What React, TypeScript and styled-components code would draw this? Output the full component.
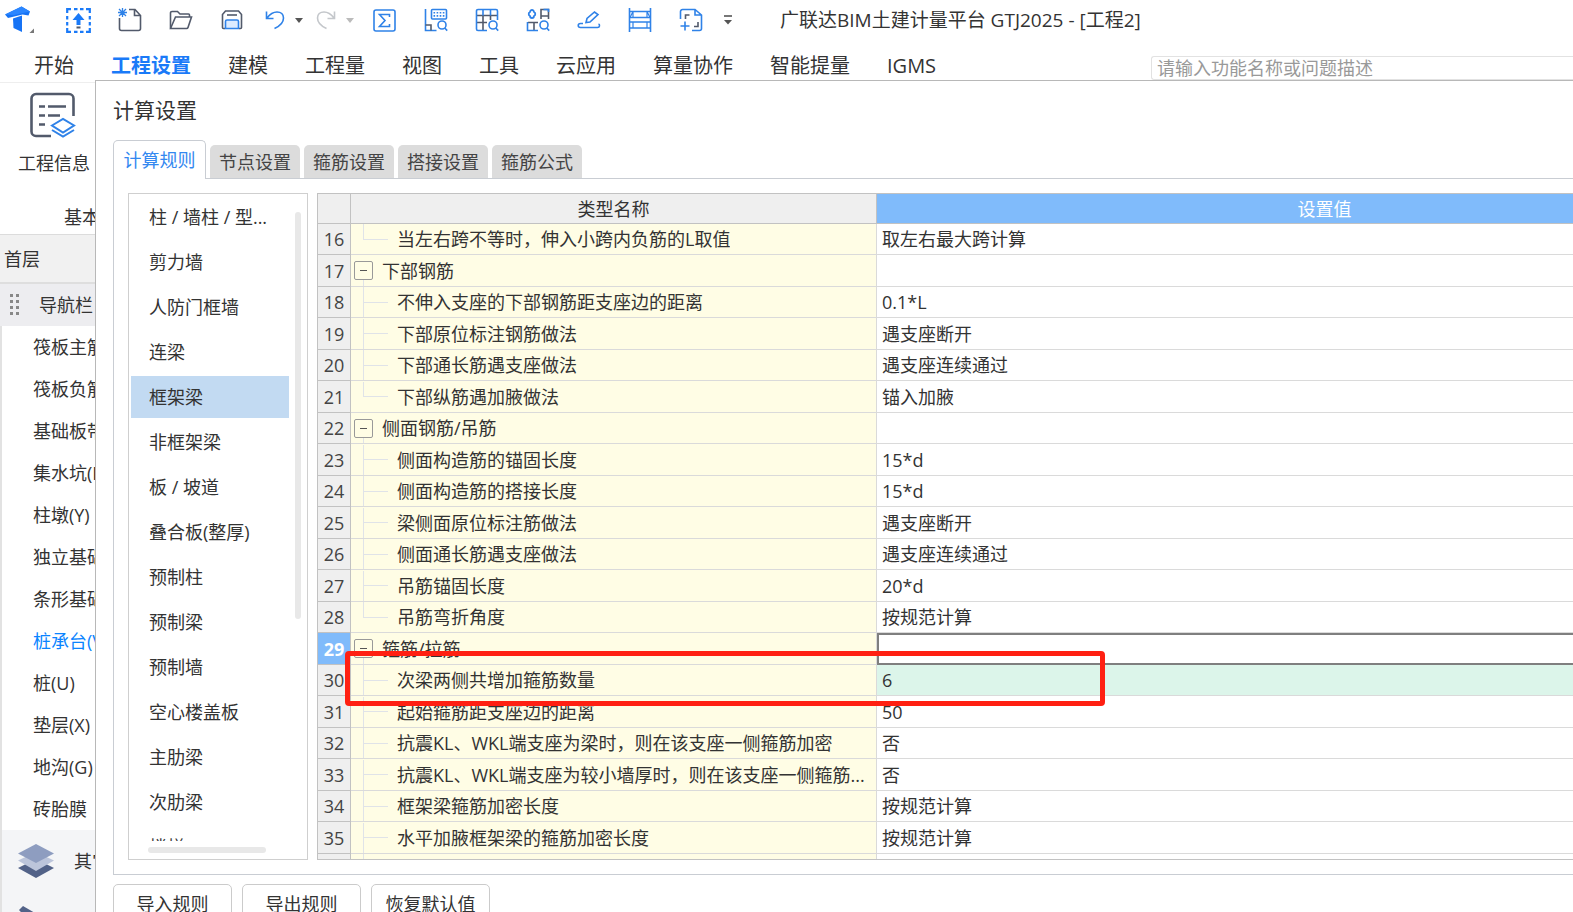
import React from "react";
import styled, { createGlobalStyle, css } from "styled-components";

const C = {
  text: "#333",
  soft: "#444",
  blue: "#1a7af8",
  icon: "#2f82e8",
  slate: "#525a6b",
  line: "#dadada",
  headLine: "#c2c2c2",
  accent: "#80bbfb",
  twig: "#e0e3e8",
};

const Global = createGlobalStyle`
  *, *::before, *::after { box-sizing: border-box; }
  html, body { margin: 0; height: 100%; overflow: hidden; }
  #root { height: 100%; }
  body, button, input, table {
    font-family: "Open Sans", "Noto Sans CJK SC", sans-serif;
    font-size: 18px;
    line-height: 26px;
    color: ${C.text};
  }
  button { background: none; border: 0; padding: 0; margin: 0; white-space: nowrap; cursor: pointer; }
  ul { list-style: none; margin: 0; padding: 0; }
`;

const Page = styled.div`
  height: 100vh;
  overflow: hidden;
  display: flex;
  flex-direction: column;
  background: #fff;
`;

const TitleBar = styled.header`
  height: 40px;
  flex: none;
  display: flex;
  align-items: center;
  padding-left: 4px;
`;

const Tools = styled.div`
  display: flex;
  align-items: center;
  width: 776px;
  flex: none;
`;

const Tool = styled.button<{ $size?: "menu" | "split" | "caret" | "more" }>`
  width: ${(p) => ({ menu: 49, split: 36, caret: 12, more: 24, normal: 51 })[p.$size ?? "normal"]}px;
  height: 40px;
  display: flex;
  align-items: center;
  justify-content: ${(p) => (p.$size === "menu" ? "flex-start" : "center")};
  flex: none;
  svg { display: block; overflow: visible; }
`;

const SplitTool = styled.div`
  width: 51px;
  display: flex;
  flex: none;
`;

const AppTitle = styled.h1`
  margin: 0;
  font-size: 19px;
  font-weight: 400;
  white-space: nowrap;
`;

const MenuBar = styled.nav`
  height: 40px;
  flex: none;
  display: flex;
  align-items: center;
  padding-left: 34px;
`;

const MenuItems = styled.div`
  display: flex;
  gap: 37px;
  padding-top: 12px;
  width: 1117px;
  flex: none;
`;

const MenuItem = styled.button<{ $active?: boolean }>`
  font-size: 20px;
  line-height: 28px;
  color: ${(p) => (p.$active ? C.blue : C.text)};
  font-weight: ${(p) => (p.$active ? 700 : 400)};
`;

const SearchBox = styled.input`
  align-self: flex-end;
  flex: 1;
  min-width: 0;
  height: 24px;
  border: 1px solid #e2e2e2;
  border-right: 0;
  border-radius: 3px 0 0 3px;
  padding: 0 5px;
  outline: 0;
  background: #fff;
  &::placeholder { color: #999; opacity: 1; }
`;

const Body = styled.div`
  flex: 1;
  min-height: 0;
  display: flex;
  overflow: hidden;
`;

const Sidebar = styled.aside`
  width: 95px;
  flex: none;
  overflow: hidden;
  white-space: nowrap;
  display: flex;
  flex-direction: column;
`;

const Ribbon = styled.div`
  height: 152px;
  flex: none;
  margin-top: 2px;
  border-top: 1px solid #eee;
  display: flex;
  flex-direction: column;
  justify-content: space-between;
`;

const RibbonButton = styled.button`
  display: flex;
  flex-direction: column;
  align-items: flex-start;
  gap: 12px;
  padding: 9px 0 0 18px;
  svg { margin-left: 12px; display: block; }
`;

const RibbonGroup = styled.div`
  padding: 0 0 4px 64px;
`;

const FloorBar = styled.div`
  height: 48px;
  flex: none;
  background: #f1f1f1;
  border-top: 1px solid #dcdcdc;
  padding: 11px 0 0 4px;
`;

const NavHeader = styled.div`
  height: 44px;
  flex: none;
  background: #ededf0;
  border-top: 2px solid #dedede;
  display: flex;
  align-items: center;
  gap: 19px;
  padding-left: 10px;
`;

const NavList = styled.ul`
  border-left: 2px solid #e2e2e2;
  flex: none;
`;

const NavItem = styled.li<{ $active?: boolean }>`
  button {
    display: block;
    width: 100%;
    height: 42px;
    text-align: left;
    padding-left: 31px;
    color: ${(p) => (p.$active ? "#0a84ff" : C.text)};
  }
`;

const NavSections = styled.div`
  flex: 1;
  background: #f4f5f7;
  border-left: 2px solid #e2e2e2;
  overflow: hidden;
`;

const NavSection = styled.button`
  display: flex;
  align-items: center;
  height: 62px;
  gap: 20px;
  padding-left: 16px;
  svg { flex: none; }
`;

const Dialog = styled.section`
  flex: 1;
  min-width: 0;
  margin-right: -232px;
  border-top: 1px solid #b8b8b8;
  border-left: 1px solid #b8b8b8;
  background: #fff;
  padding: 14px 16px 0 17px;
  display: flex;
  flex-direction: column;
`;

const DialogTitle = styled.h2`
  margin: 0;
  font-size: 21px;
  line-height: 30px;
  font-weight: 400;
`;

const Tabs = styled.div`
  display: flex;
  align-items: flex-end;
  gap: 4px;
  height: 39px;
  margin-top: 15px;
`;

const Tab = styled.button<{ $active?: boolean }>`
  width: 90px;
  height: 33px;
  border-radius: 5px 5px 0 0;
  background: #dcdcdc;
  color: ${C.soft};
  ${(p) =>
    p.$active &&
    css`
      width: 93px;
      height: 39px;
      background: #fff;
      color: #3388f0;
      border: 1px solid #c9cdd3;
      border-bottom: 0;
      margin-bottom: -1px;
      z-index: 1;
    `}
`;

const Panel = styled.div`
  border: 1px solid #c9cdd3;
  height: 697px;
  flex: none;
  padding: 14px;
  display: flex;
  gap: 9px;
`;

const Types = styled.div`
  position: relative;
  width: 180px;
  height: 667px;
  flex: none;
  border: 1px solid #cfcfcf;
  overflow: hidden;
  padding: 2px;
`;

const TypeItem = styled.li<{ $active?: boolean }>`
  height: 42px;
  width: 158px;
  margin-bottom: 3px;
  background: ${(p) => (p.$active ? "#c2daf2" : "transparent")};
  button { width: 100%; height: 42px; text-align: left; padding-left: 18px; }
`;

const ScrollY = styled.span`
  position: absolute;
  right: 6px;
  top: 18px;
  width: 6px;
  height: 407px;
  border-radius: 3px;
  background: #e8e8e8;
`;

const ScrollX = styled.div`
  position: absolute;
  inset: auto 0 0 0;
  height: 18px;
  background: #fff;
  &::after {
    content: "";
    display: block;
    width: 118px;
    height: 6px;
    margin: 6px 0 0 19px;
    border-radius: 3px;
    background: #e8e8e8;
  }
`;

const GridWrap = styled.div`
  position: relative;
  flex: 1;
  min-width: 0;
  height: 667px;
  overflow: hidden;
  border: 1px solid ${C.headLine};
`;

const Grid = styled.table`
  width: 100%;
  table-layout: fixed;
  border-collapse: separate;
  border-spacing: 0;
  th, td { padding: 0; font-weight: 400; white-space: nowrap; }
`;

const NumCol = styled.col`
  width: 33px;
`;

const NameCol = styled.col`
  width: 526px;
`;

const HeadCell = styled.th<{ $active?: boolean }>`
  height: 30px;
  background: ${(p) => (p.$active ? C.accent : "#efefef")};
  color: ${(p) => (p.$active ? "#fff" : C.text)};
  border-right: 1px solid ${C.headLine};
  border-bottom: 1px solid ${C.headLine};
`;

const Row = styled.tr`
  height: 31px;
  &:nth-child(even) { height: 32px; }
`;

const NumCell = styled.th<{ $active?: boolean }>`
  background: ${(p) => (p.$active ? C.accent : "#efefef")};
  border-right: 1px solid ${C.headLine};
  border-bottom: 1px solid ${C.headLine};
  && {
    color: ${(p) => (p.$active ? "#fff" : C.soft)};
    font-weight: ${(p) => (p.$active ? 700 : 400)};
  }
`;

type Kind = "group" | "child" | "last";

const NameCell = styled.td`
  background: #fffde5;
  border-right: 1px solid ${C.line};
  border-bottom: 1px solid ${C.line};
`;

const stem = {
  group: "12px 24px / 1px 8px",
  child: "12px 0 / 1px 100%",
  last: "12px 0 / 1px 15px",
};

const NameInner = styled.div<{ $kind: Kind }>`
  display: flex;
  align-items: center;
  height: 30px;
  padding-right: 6px;
  gap: 9px;
  padding-left: ${(p) => (p.$kind === "group" ? 3 : 12)}px;
  background: linear-gradient(${C.twig}, ${C.twig}) ${(p) => stem[p.$kind]} no-repeat;
  > span { overflow: hidden; text-overflow: ellipsis; }
`;

const Twig = styled.i`
  width: 25px;
  height: 1px;
  flex: none;
  background: ${C.twig};
`;

const Toggle = styled.button`
  width: 19px;
  height: 19px;
  flex: none;
  border: 1px solid #999;
  border-radius: 2px;
  display: flex;
  align-items: center;
  justify-content: center;
  &::after { content: ""; width: 7px; height: 1px; background: #555; }
`;

const ValueCell = styled.td<{ $tone?: "edit" | "changed" }>`
  && { padding-left: 5px; }
  border-right: 1px solid ${C.line};
  border-bottom: 1px solid ${C.line};
  background: ${(p) => (p.$tone === "changed" ? "#dcf5ea" : "#fff")};
  ${(p) => p.$tone === "edit" && css`border: 2px solid #7f7f7f;`}
`;

const Highlight = styled.div`
  position: absolute;
  left: 27px;
  top: 457px;
  width: 760px;
  height: 55px;
  border: 5px solid #ff2012;
  border-radius: 4px;
  pointer-events: none;
`;

const Actions = styled.div`
  display: flex;
  gap: 10px;
  margin-top: 9px;
`;

const ActionButton = styled.button`
  width: 119px;
  height: 40px;
  border: 1px solid #cbcbcb;
  border-radius: 5px;
  background: #fff;
`;

const svg = (w: number, h: number, children: React.ReactNode, color = C.icon) => (
  <svg width={w} height={h} viewBox={`0 0 ${w} ${h}`} fill="none" stroke={color} strokeWidth="1.6" aria-hidden="true">
    {children}
  </svg>
);

const Caret = ({ color = "#555" }: { color?: string }) => (
  <svg width="8" height="5" viewBox="0 0 8 5" aria-hidden="true">
    <path d="M0 0h8L4 5z" fill={color} />
  </svg>
);

const Lens = () => (
  <>
    <circle cx="18" cy="17" r="4" />
    <path d="M20.800 20l2.400 2.600" />
  </>
);

const icons = {
  logo: svg(30, 28, (
    <g stroke="none">
      <path d="M1 8.500L17.500 .500L26 5.500L24.500 9.500L18.500 8.500L4 12z" fill="#1673f5" />
      <path d="M1 8.500L17.500 .500L26 5.500L10 9z" fill="#2b86ff" />
      <path d="M9 12.500L18 9.500V26L9.500 22z" fill="#1673f5" />
      <path d="M30 22.500v4.500h-4.500z" fill="#777" />
    </g>
  )),
  upload: svg(25, 25, (
    <>
      <path d="M1.200 5V1.200H5M20 1.200h3.800V5M23.800 20v3.800H20M5 23.800H1.200V20" stroke="#1a7af8" strokeWidth="2.200" />
      <path d="M8 1.200h3.500M14 1.200h3.500M8 23.800h3.500M14 23.800h3.500M1.200 8v3.500M1.200 14v3.500M23.800 8v3.500M23.800 14v3.500" stroke="#1a7af8" strokeWidth="2.200" />
      <path d="M12.500 5L18.500 12h-4v5h-4v-5h-4z" fill="#1a7af8" stroke="none" />
      <path d="M10.500 19.500h4" stroke={C.slate} strokeWidth="2" />
    </>
  )),
  create: svg(24, 24, (
    <>
      <path d="M1.500 10v10.500a2 2 0 0 0 2 2h17a2 2 0 0 0 2-2V7.500L17 1.500h-6M16.500 1.500v6h6" />
      <path d="M1 1l7 7M8 1L1 8M4.500 0v9M0 4.500h9" stroke={C.icon} strokeWidth="1.300" />
    </>
  ), C.slate),
  open: svg(24, 20, (
    <>
      <path d="M1.500 18V3a1.500 1.500 0 0 1 1.500-1.500h5.500l2.500 2.500h8.500a1 1 0 0 1 1 1v2" />
      <path d="M1.500 18.500L6.500 7h16l-3.500 10.500a1.500 1.500 0 0 1-1.500 1z" />
    </>
  ), C.slate),
  save: svg(22, 20, (
    <>
      <path d="M4 18.500H2.500a1 1 0 0 1-1-1V4.500l3-3.500h13l3 3.500v13a1 1 0 0 1-1 1H18" />
      <path d="M6 5h10" />
      <path d="M4.500 18.500v-7a1.500 1.500 0 0 1 1.500-1.500h10a1.500 1.500 0 0 1 1.500 1.500v7z" stroke={C.icon} fill="#dcebff" />
    </>
  ), C.slate),
  undo: svg(20, 20, <path d="M1.500 1.500v7h7M2 8C5 4 8.500 2 12 2c4 0 6.500 2.500 6.500 6 0 4.500-3.500 8-9 10.500" />),
  redo: svg(20, 20, <path d="M18.500 1.500v7h-7M18 8C15 4 11.500 2 8 2 4 2 1.500 4.500 1.500 8c0 4.500 3.500 8 9 10.500" />, "#c4c7cb"),
  sum: svg(23, 23, (
    <>
      <rect x="1" y="1" width="21" height="21" rx="2" />
      <path d="M16.500 8V5.500H6.500l5.500 6-5.500 6h10V15" />
    </>
  )),
  plan: svg(24, 24, (
    <>
      <path d="M1.500 1v21.500h11" />
      <path d="M1.500 17h5.500v5.500" stroke={C.slate} />
      <rect x="7.500" y="1.500" width="15" height="9.500" rx="1" />
      <path d="M9.500 4.700h11M9.500 7.900h11" strokeDasharray="1.600 1.500" />
      <Lens />
    </>
  )),
  table: svg(24, 24, (
    <>
      <path d="M8 7.500v15M15.500 7.500V12M2 14.500h10M2 7.500h20" stroke={C.slate} />
      <path d="M12 22.500H3a1.500 1.500 0 0 1-1.500-1.500V3A1.500 1.500 0 0 1 3 1.500h18A1.500 1.500 0 0 1 22.500 3v9M8 1.500v6M15.500 1.500v6" />
      <Lens />
    </>
  )),
  parts: svg(24, 24, (
    <>
      <path d="M6 2a2 2 0 0 0-2 2 2.200 2.200 0 0 0 0 4 2 2 0 0 0 4 0 2.200 2.200 0 0 0 0-4 2 2 0 0 0-2-2z" strokeWidth="1.800" />
      <path d="M15 11V1.500h7.500V11M15 8h7.500M2 14.500h10M8 14.500v8" stroke={C.slate} />
      <path d="M22.500 4V1.500h-5M1.500 14v8.500H12" />
      <Lens />
    </>
  )),
  edit: svg(24, 18, (
    <>
      <path d="M9 11.500l1-4L17.500 1 21 3.500 13 11z" />
      <path d="M6 12.500H3.500c-3 0-3 4 0 4h17c2.500 0 2.500-3 1-3.500" />
    </>
  )),
  beam: svg(24, 24, (
    <>
      <path d="M1.500 0v24M22.500 0v24" />
      <path d="M1.500 3.500h21M1.500 9.500h21M1.500 14h21M1.500 20h21" />
      <path d="M5 3.500L2 9.500M5 14v6M19 3.500l3 6M19 14v6M5 3.500v6M19 3.500v6" strokeWidth="1.200" />
    </>
  )),
  addPage: svg(24, 24, (
    <>
      <path d="M1.500 11V3.500a2 2 0 0 1 2-2H16l6.500 5.500v13.500a2 2 0 0 1-2 2H13M16 1.500V7h6.500" />
      <path d="M6.500 11V7h4M19 14v4.500h-4" stroke={C.slate} />
      <path d="M6 13.500v9M1.500 18h9" />
    </>
  )),
  more: svg(8, 10, (
    <>
      <path d="M0 1h8" stroke="#555" />
      <path d="M0 5h8L4 9.500z" fill="#555" stroke="none" />
    </>
  )),
};

const quickTools: [keyof typeof icons, string][] = [
  ["sum", "汇总计算"],
  ["plan", "查看工程量"],
  ["table", "查看报表"],
  ["parts", "查看构件量"],
  ["edit", "编辑钢筋"],
  ["beam", "梁平齐板"],
  ["addPage", "新建图元"],
];

const menu = ["开始", "工程设置", "建模", "工程量", "视图", "工具", "云应用", "算量协作", "智能提量", "IGMS"];
const navItems = ["筏板主筋(R)", "筏板负筋(X)", "基础板带(W)", "集水坑(K)", "柱墩(Y)", "独立基础(D)", "条形基础(T)", "桩承台(V)", "桩(U)", "垫层(X)", "地沟(G)", "砖胎膜"];
const tabs = ["计算规则", "节点设置", "箍筋设置", "搭接设置", "箍筋公式"];
const types = ["柱 / 墙柱 / 型...", "剪力墙", "人防门框墙", "连梁", "框架梁", "非框架梁", "板 / 坡道", "叠合板(整厚)", "预制柱", "预制梁", "预制墙", "空心楼盖板", "主肋梁", "次肋梁", "楼梯"];
const rows: [number, Kind, string, string][] = [
  [16, "last", "当左右跨不等时，伸入小跨内负筋的L取值", "取左右最大跨计算"],
  [17, "group", "下部钢筋", ""],
  [18, "child", "不伸入支座的下部钢筋距支座边的距离", "0.1*L"],
  [19, "child", "下部原位标注钢筋做法", "遇支座断开"],
  [20, "child", "下部通长筋遇支座做法", "遇支座连续通过"],
  [21, "last", "下部纵筋遇加腋做法", "锚入加腋"],
  [22, "group", "侧面钢筋/吊筋", ""],
  [23, "child", "侧面构造筋的锚固长度", "15*d"],
  [24, "child", "侧面构造筋的搭接长度", "15*d"],
  [25, "child", "梁侧面原位标注筋做法", "遇支座断开"],
  [26, "child", "侧面通长筋遇支座做法", "遇支座连续通过"],
  [27, "child", "吊筋锚固长度", "20*d"],
  [28, "last", "吊筋弯折角度", "按规范计算"],
  [29, "group", "箍筋/拉筋", ""],
  [30, "child", "次梁两侧共增加箍筋数量", "6"],
  [31, "child", "起始箍筋距支座边的距离", "50"],
  [32, "child", "抗震KL、WKL端支座为梁时，则在该支座一侧箍筋加密", "否"],
  [33, "child", "抗震KL、WKL端支座为较小墙厚时，则在该支座一侧箍筋...", "否"],
  [34, "child", "框架梁箍筋加密长度", "按规范计算"],
  [35, "child", "水平加腋框架梁的箍筋加密长度", "按规范计算"],
];

const QuickBar = () => (
  <Tools role="toolbar" aria-label="快速访问">
    <Tool $size="menu" aria-label="应用菜单">{icons.logo}</Tool>
    <Tool aria-label="上传">{icons.upload}</Tool>
    <Tool aria-label="新建">{icons.create}</Tool>
    <Tool aria-label="打开">{icons.open}</Tool>
    <Tool aria-label="保存">{icons.save}</Tool>
    <SplitTool>
      <Tool $size="split" aria-label="撤销">{icons.undo}</Tool>
      <Tool $size="caret" aria-label="撤销列表"><Caret /></Tool>
    </SplitTool>
    <SplitTool>
      <Tool $size="split" aria-label="恢复">{icons.redo}</Tool>
      <Tool $size="caret" aria-label="恢复列表"><Caret color="#bbb" /></Tool>
    </SplitTool>
    {quickTools.map(([icon, label]) => (
      <Tool key={icon} aria-label={label}>{icons[icon]}</Tool>
    ))}
    <Tool $size="more" aria-label="更多">{icons.more}</Tool>
  </Tools>
);

const InfoIcon = () => (
  <svg width="46" height="46" viewBox="0 0 46 46" fill="none" aria-hidden="true">
    <path d="M21 44H6a4.500 4.500 0 0 1-4.500-4.500v-33A4.500 4.500 0 0 1 6 2h33a4.500 4.500 0 0 1 4.500 4.500V24" stroke={C.slate} strokeWidth="2.600" />
    <path d="M9 14.500h6M18 14.500h18M9 23.500h6M18 23.500h12M9 32.500h6" stroke={C.slate} strokeWidth="2.600" />
    <path d="M22 33.500L33 27l11 6.500L33 40.500z" stroke={C.icon} strokeWidth="2" fill="#fff" />
    <path d="M22 38l11 6.500L44 38" stroke={C.icon} strokeWidth="2" />
  </svg>
);

const DotsIcon = () => (
  <svg width="10" height="22" viewBox="0 0 10 22" fill="#888" aria-hidden="true">
    {[0, 6, 12, 18].map((y) => (
      <g key={y}>
        <rect x="0" y={y} width="3" height="3" />
        <rect x="6" y={y} width="3" height="3" />
      </g>
    ))}
  </svg>
);

const LayersIcon = () => (
  <svg width="36" height="34" viewBox="0 0 36 34" aria-hidden="true">
    <path d="M0 24L18 15l18 9-18 10z" fill="#526288" />
    <path d="M0 16.500L18 8l18 8.500L18 27z" fill="#bcc5db" />
    <path d="M0 9.500L18 0l18 9.500L18 19z" fill="#8e9dc0" />
  </svg>
);

const PencilIcon = () => (
  <svg width="36" height="34" viewBox="0 0 36 34" aria-hidden="true">
    <path d="M1 4L5 0l24 14 3 12-12-2z" fill="#526288" />
  </svg>
);

export default function App() {
  return (
    <Page>
      <Global />
      <TitleBar>
        <QuickBar />
        <AppTitle>广联达BIM土建计量平台 GTJ2025 - [工程2]</AppTitle>
      </TitleBar>
      <MenuBar>
        <MenuItems>
          {menu.map((m, i) => (
            <MenuItem key={m} $active={i === 1}>{m}</MenuItem>
          ))}
        </MenuItems>
        <SearchBox aria-label="搜索功能" placeholder="请输入功能名称或问题描述" />
      </MenuBar>
      <Body>
        <Sidebar>
          <Ribbon>
            <RibbonButton><InfoIcon />工程信息</RibbonButton>
            <RibbonGroup>基本设置</RibbonGroup>
          </Ribbon>
          <FloorBar>首层</FloorBar>
          <NavHeader><DotsIcon />导航栏</NavHeader>
          <NavList>
            {navItems.map((n, i) => (
              <NavItem key={n} $active={i === 7}><button>{n}</button></NavItem>
            ))}
          </NavList>
          <NavSections>
            <NavSection><LayersIcon />其它</NavSection>
            <NavSection aria-label="自定义"><PencilIcon /></NavSection>
          </NavSections>
        </Sidebar>
        <Dialog role="dialog" aria-labelledby="dialog-title">
          <DialogTitle id="dialog-title">计算设置</DialogTitle>
          <Tabs role="tablist">
            {tabs.map((t, i) => (
              <Tab key={t} role="tab" aria-selected={i === 0} $active={i === 0}>{t}</Tab>
            ))}
          </Tabs>
          <Panel>
            <Types>
              <ul>
                {types.map((t, i) => (
                  <TypeItem key={t} $active={i === 4}><button>{t}</button></TypeItem>
                ))}
              </ul>
              <ScrollY />
              <ScrollX />
            </Types>
            <GridWrap>
              <Grid>
                <colgroup>
                  <NumCol />
                  <NameCol />
                  <col />
                </colgroup>
                <thead>
                  <tr>
                    <HeadCell aria-label="序号" />
                    <HeadCell>类型名称</HeadCell>
                    <HeadCell $active>设置值</HeadCell>
                  </tr>
                </thead>
                <tbody>
                  {rows.map(([n, kind, name, value]) => (
                    <Row key={n}>
                      <NumCell scope="row" $active={n === 29}>{n}</NumCell>
                      <NameCell>
                        <NameInner $kind={kind}>
                          {kind === "group" ? <Toggle aria-label="折叠" /> : <Twig />}
                          <span>{name}</span>
                        </NameInner>
                      </NameCell>
                      <ValueCell $tone={n === 29 ? "edit" : n === 30 ? "changed" : undefined}>{value}</ValueCell>
                    </Row>
                  ))}
                  <Row>
                    <NumCell />
                    <NameCell><NameInner $kind="child" /></NameCell>
                    <ValueCell />
                  </Row>
                </tbody>
              </Grid>
              <Highlight />
            </GridWrap>
          </Panel>
          <Actions>
            <ActionButton>导入规则</ActionButton>
            <ActionButton>导出规则</ActionButton>
            <ActionButton>恢复默认值</ActionButton>
          </Actions>
        </Dialog>
      </Body>
    </Page>
  );
}
